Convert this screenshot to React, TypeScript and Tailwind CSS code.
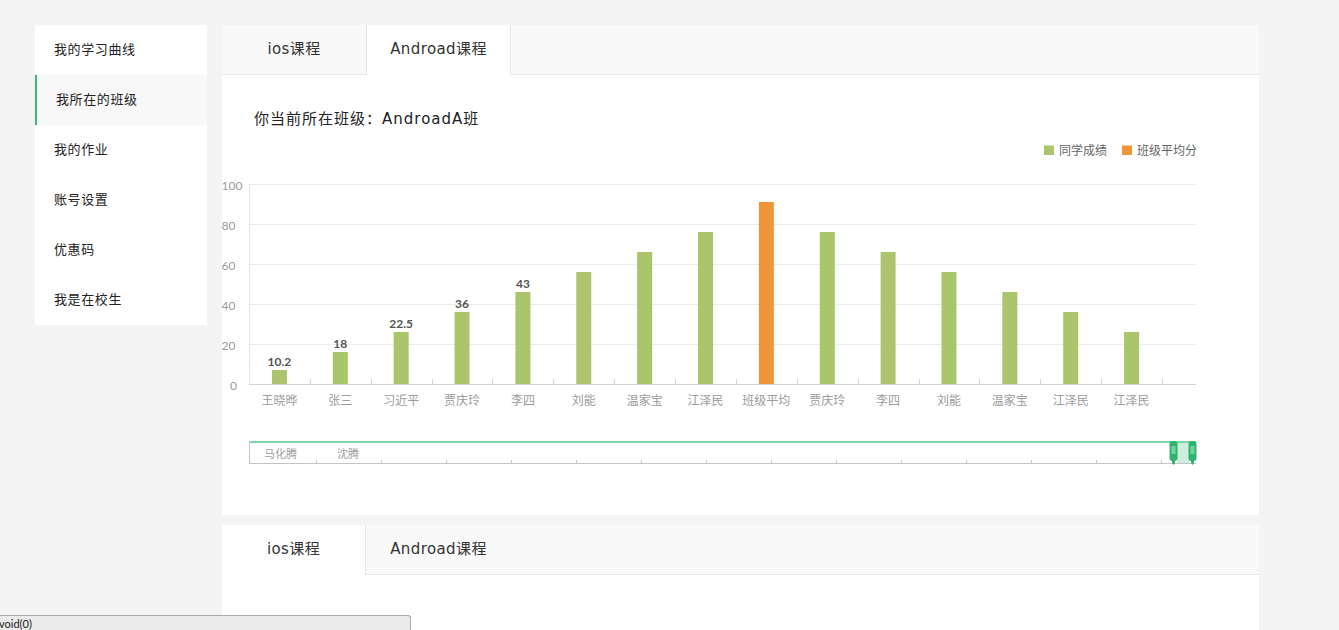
import React from "react";

const FONT = { fontFamily: 'Lato, "Noto Sans CJK SC", sans-serif' };
const WIDE = { fontFamily: '"DejaVu Sans", "Noto Sans CJK SC", sans-serif' };

const menu = ["我的学习曲线", "我所在的班级", "我的作业", "账号设置", "优惠码", "我是在校生"];

const cats = ["王晓晔", "张三", "习近平", "贾庆玲", "李四", "刘能", "温家宝", "江泽民", "班级平均", "贾庆玲", "李四", "刘能", "温家宝", "江泽民", "江泽民"];
const vals = [7, 16, 26, 36, 46, 56, 66, 76, 91, 76, 66, 56, 46, 36, 26];
const labels: Record<number, string> = { 0: "10.2", 1: "18", 2: "22.5", 3: "36", 4: "43" };

function Tabs({ active }: { active: 0 | 1 }) {
  const names = ["ios课程", "Androad课程"];
  return (
    <div className="flex h-[50px] bg-[#f9f9f9]" style={WIDE}>
      {names.map((n, i) => {
        const isActive = i === active;
        let cls = "flex justify-center pt-[14px] text-[15px] leading-5 tracking-[0.4px] text-[#333] h-[50px] box-border ";
        cls += i === 0 ? "w-[144px] " : "w-[145px] ";
        if (isActive) {
          cls += "bg-white border-r border-[#e6e6e6] ";
          if (i === 1) cls += "border-l ";
        } else {
          cls += "border-b border-[#e8e8e8] ";
        }
        return (
          <div key={n} className={cls}>
            {n}
          </div>
        );
      })}
      <div className="h-[50px] flex-1 border-b border-[#e8e8e8]" />
    </div>
  );
}

function Chart() {
  const s = (1162 - 249) / 15;
  const ox = 222;
  const oy = 129;
  const X = (x: number) => x - ox;
  const Y = (v: number) => 384 - 2 * v - oy;
  return (
    <svg width={1037} height={386} className="block" style={FONT}>
      {/* legend */}
      <rect x={X(1044)} y={145.5 - oy} width={10} height={9.5} fill="#abc56c" />
      <text x={X(1059)} y={150 - oy} dominantBaseline="central" fontSize={12} fill="#666">同学成绩</text>
      <rect x={X(1122)} y={145.5 - oy} width={10} height={9.5} fill="#f0963a" />
      <text x={X(1137)} y={150 - oy} dominantBaseline="central" fontSize={12} fill="#666">班级平均分</text>

      {/* grid */}
      {[20, 40, 60, 80, 100].map((v) => (
        <line key={v} x1={X(249)} x2={X(1196)} y1={Y(v) + 0.5} y2={Y(v) + 0.5} stroke="#ececec" strokeWidth={1} />
      ))}
      <line x1={X(249.5)} x2={X(249.5)} y1={Y(100)} y2={Y(0)} stroke="#e3e3e3" strokeWidth={1} />
      <line x1={X(249)} x2={X(1196)} y1={Y(0) + 0.5} y2={Y(0) + 0.5} stroke="#d4d4d4" strokeWidth={1} />
      {Array.from({ length: 15 }).map((_, k) => {
        const x = Math.round(249 + s * (k + 1)) + 0.5;
        return <line key={k} x1={X(x)} x2={X(x)} y1={Y(0) - 5} y2={Y(0)} stroke="#d4d4d4" />;
      })}

      {/* y labels */}
      {[0, 20, 40, 60, 80, 100].map((v) => (
        <text
          key={v}
          x={v === 0 ? X(230) : X(221.5)}
          y={Y(v) + 1}
          dominantBaseline="central"
          fontSize={12}
          fill="#9a9a9a"
        >
          {v}
        </text>
      ))}

      {/* bars */}
      {vals.map((v, i) => {
        const cx = 249 + s * (i + 0.5);
        return (
          <g key={i}>
            <rect x={X(cx - 7.5)} y={Y(v)} width={15} height={2 * v} fill={i === 8 ? "#f0963a" : "#abc56c"} />
            {labels[i] && (
              <text x={X(cx)} y={Y(v) - 9} textAnchor="middle" dominantBaseline="central" fontSize={12} fontWeight={700} fill="#555">
                {labels[i]}
              </text>
            )}
            <text x={X(cx)} y={400 - oy} textAnchor="middle" dominantBaseline="central" fontSize={12} fill="#9c9c9c">
              {cats[i]}
            </text>
          </g>
        );
      })}

      {/* data zoom */}
      <rect x={X(1177)} y={441 - oy} width={13} height={23} fill="#cdeedc" />
      <line x1={X(249)} x2={X(1196)} y1={442 - oy} y2={442 - oy} stroke="#80d4a8" strokeWidth={2} />
      <line x1={X(249.5)} x2={X(249.5)} y1={441 - oy} y2={464 - oy} stroke="#c8c8c8" strokeWidth={1} />
      <line x1={X(249)} x2={X(1196)} y1={463.5 - oy} y2={463.5 - oy} stroke="#c4c4c4" strokeWidth={1} />
      {Array.from({ length: 14 }).map((_, k) => {
        const x = 316.5 + 65 * k;
        if (x > 1170) return null;
        return <line key={k} x1={X(x)} x2={X(x)} y1={460 - oy} y2={464 - oy} stroke="#c8c8c8" />;
      })}
      <text x={X(264)} y={453 - oy} dominantBaseline="central" fontSize={11} fill="#a0a0a0">马化腾</text>
      <text x={X(337)} y={453 - oy} dominantBaseline="central" fontSize={11} fill="#a0a0a0">沈腾</text>
      {[1169.5, 1188.5].map((hx) => (
        <g key={hx}>
          <rect x={X(hx)} y={441 - oy} width={8} height={20} rx={3} fill="#2eb46e" />
          <rect x={X(hx + 2)} y={446 - oy} width={4} height={8} fill="#6fd39c" />
          <rect x={X(hx + 2.5)} y={460 - oy} width={3} height={3} fill="#2eb46e" />
          <polygon points={`${X(hx + 2.5)},${463 - oy} ${X(hx + 5.5)},${463 - oy} ${X(hx + 4)},${465 - oy}`} fill="#2eb46e" />
        </g>
      ))}
    </svg>
  );
}

export default function App() {
  return (
    <div className="relative h-[630px] w-full overflow-hidden bg-[#f4f4f4]" style={FONT}>
      <div className="flex gap-[15px] pl-[35px] pt-[25px]">
        <div className="w-[172px] self-start bg-white">
          {menu.map((m, i) => (
            <div
              key={m}
              className={
                "flex h-[50px] items-center text-[13px] tracking-[0.6px] text-[#222] " +
                (i === 1 ? "border-l-2 border-[#3bb878] bg-[#f8f8f8] pl-[19px]" : "pl-[19px]")
              }
            >
              {m}
            </div>
          ))}
        </div>
        <div className="flex w-[1037px] flex-col gap-[10px]">
          <div className="h-[490px] bg-white">
            <Tabs active={1} />
            <div className="pl-8 pt-[34px] text-[15px] leading-5 tracking-[1px] text-[#222]" style={WIDE}>
              你当前所在班级：AndroadA班
            </div>
            <Chart />
          </div>
          <div className="h-[200px] bg-white">
            <Tabs active={0} />
          </div>
        </div>
      </div>
      <div className="absolute bottom-0 left-0 flex h-[15px] w-[411px] items-center rounded-tr-[3px] border border-b-0 border-l-0 border-[#a9a9a9] bg-[#ebebeb] text-[11px] leading-none text-[#222]">
        <span className="-ml-[1px]">void(0)</span>
      </div>
    </div>
  );
}
